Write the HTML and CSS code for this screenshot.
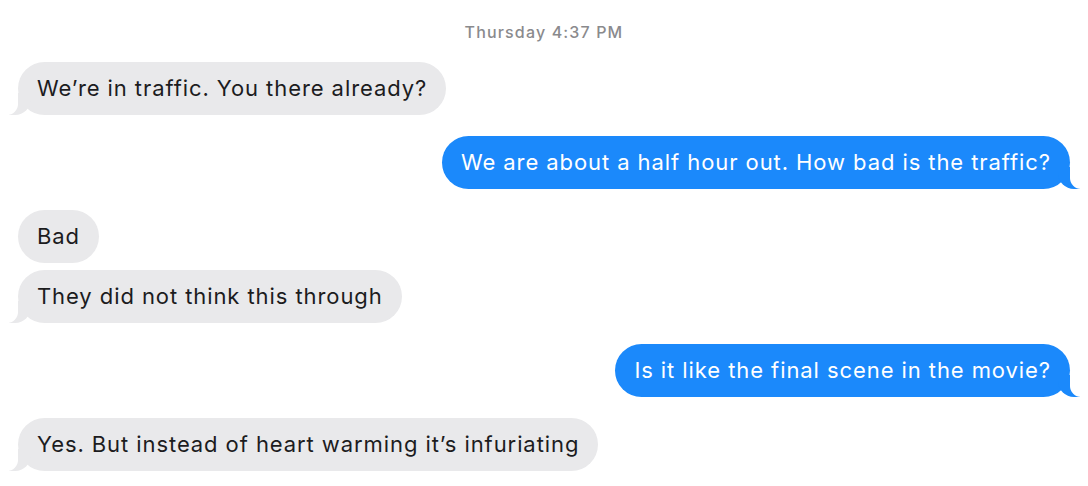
FILE: index.html
```html
<!DOCTYPE html>
<html>
<head>
<meta charset="utf-8">
<link rel="stylesheet" href="styles.css">
</head>
<body>
<div class="chat">
  <div class="stamp">Thursday 4:37 PM</div>
  <div class="msg recv tail">We’re in traffic. You there already?</div>
  <div class="msg sent tail gap">We are about a half hour out. How bad is the traffic?</div>
  <div class="msg recv gap">Bad</div>
  <div class="msg recv tail">They did not think this through</div>
  <div class="msg sent tail gap">Is it like the final scene in the movie?</div>
  <div class="msg recv tail gap">Yes. But instead of heart warming it’s infuriating</div>
</div>
</body>
</html>
```

FILE: styles.css
```css
html, body {
  margin: 0;
  background: #ffffff;
}
.chat {
  display: flex;
  flex-direction: column;
  padding: 22px 18px 0 18px;
  font-family: Inter, "Noto Sans", sans-serif;
}
.stamp {
  align-self: center;
  font-size: 16px;
  font-weight: 500;
  letter-spacing: 1.15px;
  line-height: 20px;
  color: #8a8a8d;
  margin-bottom: 20px;
}
.msg {
  position: relative;
  font-size: 22px;
  letter-spacing: 0.92px;
  line-height: 27px;
  padding: 13px 19px;
  border-radius: 27px;
  margin-top: 7px;
  max-width: 800px;
}
.stamp + .msg { margin-top: 0; }
.msg.gap { margin-top: 21px; }
.recv {
  align-self: flex-start;
  background: #e9e9eb;
  color: #1c1c1e;
}
.sent {
  align-self: flex-end;
  background: #1b89fb;
  color: #ffffff;
}
.recv.tail::before {
  content: "";
  position: absolute;
  bottom: 0;
  left: -9px;
  width: 22px;
  height: 22px;
  background: #e9e9eb;
  border-bottom-right-radius: 16px;
}
.recv.tail::after {
  content: "";
  position: absolute;
  bottom: 0;
  left: -12px;
  width: 12px;
  height: 22px;
  background: #ffffff;
  border-bottom-right-radius: 11px;
}
.sent.tail::before {
  content: "";
  position: absolute;
  bottom: 0;
  right: -10px;
  width: 22px;
  height: 22px;
  background: #1b89fb;
  border-bottom-left-radius: 16px;
}
.sent.tail::after {
  content: "";
  position: absolute;
  bottom: 0;
  right: -13px;
  width: 13px;
  height: 22px;
  background: #ffffff;
  border-bottom-left-radius: 11px;
}
```
